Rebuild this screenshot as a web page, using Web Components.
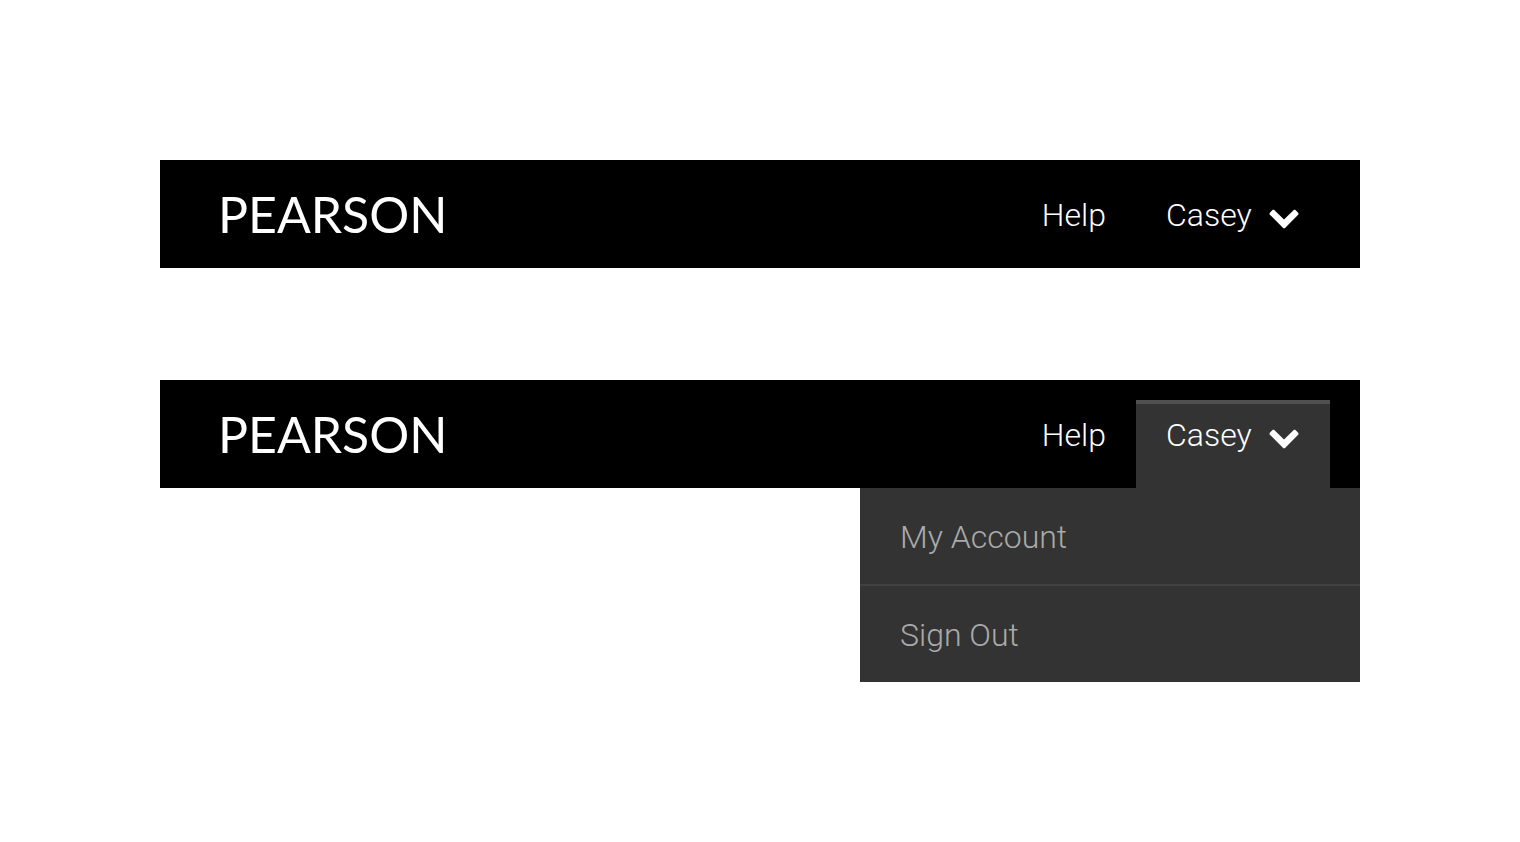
<!DOCTYPE html>
<html lang="en">
<head>
<meta charset="utf-8">
<title>Pearson header</title>
<style>
  body { margin: 0; background: #fff; font-family: Roboto, "Liberation Sans", sans-serif; font-weight: 300; }
</style>
</head>
<body>
<header-gallery>
  <site-header user="Casey"></site-header>
  <site-header user="Casey" open>
    <menu-item slot="menu" href="#account">My Account</menu-item>
    <menu-item slot="menu" href="#signout">Sign Out</menu-item>
  </site-header>
</header-gallery>

<template id="header-gallery">
  <style>
    :host { display: flex; flex-direction: column; gap: 112px; padding: 160px; }
  </style>
  <slot></slot>
</template>

<template id="brand-logo">
  <style>
    :host { display: block; }
    a { display: block; color: #fff; text-decoration: none; font: 400 50px/56px Lato, sans-serif; }
  </style>
  <a href="#home">PEARSON</a>
</template>

<template id="user-toggle">
  <style>
    :host { display: block; }
    button { box-sizing: border-box; display: flex; align-items: flex-start; justify-content: space-between;
      width: 194px; height: 88px; margin: 0; padding: 11px 30px 0; border: 0; border-top: 4px solid transparent;
      background: none; color: #fff; font: inherit; font-size: 32px; line-height: 40px; cursor: pointer; }
    :host([open]) button { background: #333; border-color: #505050; }
    svg { display: block; width: 32px; height: 24px; margin-top: 12px; }
  </style>
  <button type="button" aria-haspopup="true">
    <slot></slot>
    <svg viewBox="0 0 32 24" aria-hidden="true"><path d="M6 2.8 16 12.6 26 2.8 27.2 2.8 30.4 6 30.4 7.4 16.8 21.2 15.4 21.2 1.6 7.4 1.6 6 4.8 2.8Z" fill="#fff"/></svg>
  </button>
</template>

<template id="site-header">
  <style>
    :host { display: block; color: #fff; }
    header { display: flex; align-items: flex-end; justify-content: space-between; height: 108px; padding: 0 30px 0 58px; background: #000; }
    brand-logo { align-self: center; }
    nav { display: flex; align-items: flex-end; }
    .help { box-sizing: border-box; height: 88px; padding: 15px 30px 0; color: #fff; text-decoration: none; font-size: 32px; line-height: 40px; }
    .menu { display: none; width: 500px; max-width: 100%; margin-left: auto; background: #333; }
    :host([open]) .menu { display: block; }
  </style>
  <header>
    <brand-logo></brand-logo>
    <nav>
      <a class="help" href="#help">Help</a>
      <user-toggle></user-toggle>
    </nav>
  </header>
  <div class="menu"><slot name="menu"></slot></div>
</template>

<template id="menu-item">
  <style>
    :host { display: block; }
    :host(:not(:first-child)) { border-top: 2px solid #404040; }
    a { display: block; padding: 29px 40px 27px; color: #aaa; text-decoration: none; font-size: 32px; line-height: 40px; }
  </style>
  <a><slot></slot></a>
</template>

<script>
  class TemplateElement extends HTMLElement {
    constructor() {
      super();
      const source = document.getElementById(this.localName);
      this.attachShadow({ mode: "open" }).append(source.content.cloneNode(true));
    }
  }
  customElements.define("header-gallery", class extends TemplateElement {});
  customElements.define("brand-logo", class extends TemplateElement {});
  customElements.define("user-toggle", class extends TemplateElement {
    connectedCallback() {
      this.shadowRoot.querySelector("button").setAttribute("aria-expanded", this.hasAttribute("open"));
    }
  });
  customElements.define("menu-item", class extends TemplateElement {
    connectedCallback() {
      this.shadowRoot.querySelector("a").href = this.getAttribute("href");
    }
  });
  customElements.define("site-header", class extends TemplateElement {
    connectedCallback() {
      const toggle = this.shadowRoot.querySelector("user-toggle");
      toggle.textContent = this.getAttribute("user");
      toggle.toggleAttribute("open", this.hasAttribute("open"));
      toggle.shadowRoot.querySelector("button").setAttribute("aria-expanded", this.hasAttribute("open"));
    }
  });
</script>
</body>
</html>
